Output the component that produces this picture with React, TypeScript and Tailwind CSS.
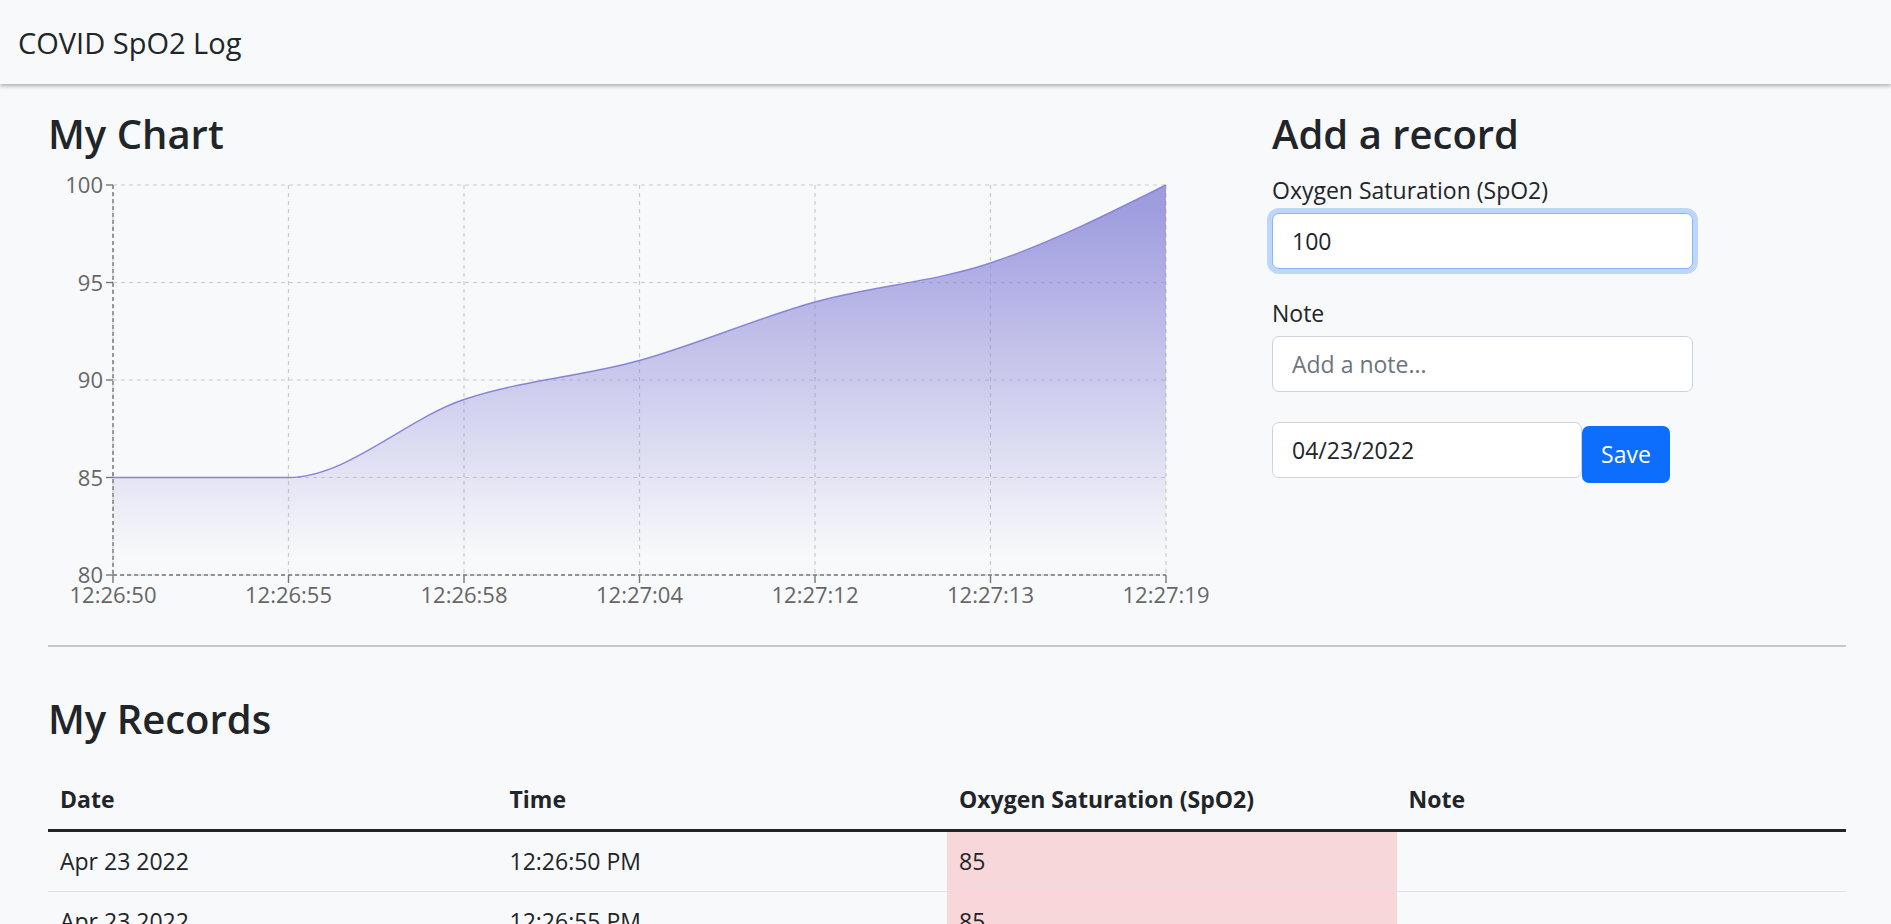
import React from "react";

type Reading = {
  date: string;
  time: string;
  label: string;
  spo2: number;
  note: string;
};

const readings: Reading[] = [
  { date: "Apr 23 2022", time: "12:26:50 PM", label: "12:26:50", spo2: 85, note: "" },
  { date: "Apr 23 2022", time: "12:26:55 PM", label: "12:26:55", spo2: 85, note: "" },
  { date: "Apr 23 2022", time: "12:26:58 PM", label: "12:26:58", spo2: 89, note: "" },
  { date: "Apr 23 2022", time: "12:27:04 PM", label: "12:27:04", spo2: 91, note: "" },
  { date: "Apr 23 2022", time: "12:27:12 PM", label: "12:27:12", spo2: 94, note: "" },
  { date: "Apr 23 2022", time: "12:27:13 PM", label: "12:27:13", spo2: 96, note: "" },
  { date: "Apr 23 2022", time: "12:27:19 PM", label: "12:27:19", spo2: 100, note: "" },
];

// plot box inside the svg
const LEFT = 65;
const RIGHT = 1118;
const TOP = 10;
const BOTTOM = 400;
const Y_MIN = 80;
const Y_MAX = 100;

const xAt = (i: number) => LEFT + (i * (RIGHT - LEFT)) / (readings.length - 1);
const yAt = (v: number) => BOTTOM - ((v - Y_MIN) / (Y_MAX - Y_MIN)) * (BOTTOM - TOP);

// same shape as d3's curveMonotoneX
function monotonePath(p: [number, number][]) {
  const n = p.length;
  const m = new Array(n).fill(0);
  const sign = (x: number) => (x < 0 ? -1 : 1);
  for (let i = 1; i < n - 1; i++) {
    const h0 = p[i][0] - p[i - 1][0];
    const h1 = p[i + 1][0] - p[i][0];
    const s0 = (p[i][1] - p[i - 1][1]) / h0;
    const s1 = (p[i + 1][1] - p[i][1]) / h1;
    const q = (s0 * h1 + s1 * h0) / (h0 + h1);
    m[i] = (sign(s0) + sign(s1)) * Math.min(Math.abs(s0), Math.abs(s1), 0.5 * Math.abs(q)) || 0;
  }
  m[0] = (3 * (p[1][1] - p[0][1]) / (p[1][0] - p[0][0]) - m[1]) / 2;
  m[n - 1] = (3 * (p[n - 1][1] - p[n - 2][1]) / (p[n - 1][0] - p[n - 2][0]) - m[n - 2]) / 2;

  let d = `M${p[0][0]},${p[0][1]}`;
  for (let i = 0; i < n - 1; i++) {
    const dx = (p[i + 1][0] - p[i][0]) / 3;
    d += ` C${p[i][0] + dx},${p[i][1] + dx * m[i]} ${p[i + 1][0] - dx},${p[i + 1][1] - dx * m[i + 1]} ${p[i + 1][0]},${p[i + 1][1]}`;
  }
  return d;
}

function SpO2Chart() {
  const pts = readings.map((r, i) => [xAt(i), yAt(r.spo2)] as [number, number]);
  const line = monotonePath(pts);
  const area = `${line} L${RIGHT},${BOTTOM} L${LEFT},${BOTTOM} Z`;
  const yTicks = [80, 85, 90, 95, 100];

  return (
    <svg width="1200" height="435" className="mt-[17px] block">
      <defs>
        <linearGradient id="spo2Fill" x1="0" y1="0" x2="0" y2="1">
          <stop offset="5%" stopColor="#8884d8" stopOpacity={0.8} />
          <stop offset="95%" stopColor="#8884d8" stopOpacity={0} />
        </linearGradient>
      </defs>

      {/* grid */}
      <g stroke="#cccccc" strokeDasharray="4 4" strokeWidth="1.2">
        {yTicks.map((t) => (
          <line key={t} x1={LEFT} x2={RIGHT} y1={yAt(t)} y2={yAt(t)} />
        ))}
        {readings.map((_, i) => (
          <line key={i} x1={xAt(i)} x2={xAt(i)} y1={TOP} y2={BOTTOM} />
        ))}
      </g>

      <path d={area} fill="url(#spo2Fill)" />
      <path d={line} fill="none" stroke="#8884d8" strokeWidth="1.4" />

      {/* axes */}
      <g stroke="#777777" strokeWidth="1.4">
        <line x1={LEFT} x2={LEFT} y1={TOP} y2={BOTTOM} strokeDasharray="4 3" />
        <line x1={LEFT} x2={RIGHT} y1={BOTTOM} y2={BOTTOM} strokeDasharray="4 3" />
        {yTicks.map((t) => (
          <line key={t} x1={LEFT - 7} x2={LEFT} y1={yAt(t)} y2={yAt(t)} />
        ))}
        {readings.map((_, i) => (
          <line key={i} x1={xAt(i)} x2={xAt(i)} y1={BOTTOM} y2={BOTTOM + 8} />
        ))}
      </g>

      <g fill="#666666" fontSize="22" fontFamily="'Open Sans', sans-serif">
        {yTicks.map((t) => (
          <text key={t} x={LEFT - 10} y={yAt(t) + 8} textAnchor="end">
            {t}
          </text>
        ))}
        {readings.map((r, i) => (
          <text key={i} x={xAt(i)} y={428} textAnchor="middle">
            {r.label}
          </text>
        ))}
      </g>
    </svg>
  );
}

function RecordForm() {
  return (
    <div className="w-[421px]">
      <h2 className="text-[40px] font-semibold leading-[48px]">Add a record</h2>

      <label className="mt-[15px] block text-[23px] leading-[34px]">Oxygen Saturation (SpO2)</label>
      <input
        type="text"
        defaultValue="100"
        className="mt-[6px] block h-[56px] w-full rounded-[7px] border border-[#86b7fe] bg-white px-[19px] text-[23px] text-[#212529] shadow-[0_0_0_5px_rgba(13,110,253,0.25)] outline-none"
      />

      <label className="mt-[27px] block text-[23px] leading-[34px]">Note</label>
      <input
        type="text"
        placeholder="Add a note..."
        className="mt-[6px] block h-[56px] w-full rounded-[7px] border border-[#ced4da] bg-white px-[19px] text-[23px] text-[#212529] placeholder:text-[#6c757d] outline-none"
      />

      <div className="mt-[30px] flex items-start">
        <input
          type="text"
          defaultValue="04/23/2022"
          className="h-[56px] w-[310px] rounded-[7px] border border-[#ced4da] bg-white px-[19px] text-[23px] text-[#212529] outline-none"
        />
        <button className="mt-[4px] h-[57px] w-[88px] rounded-[7px] bg-[#0d6efd] text-[23px] text-white">
          Save
        </button>
      </div>
    </div>
  );
}

function RecordsTable() {
  return (
    <table className="mt-[26px] w-full table-fixed border-collapse text-[23px]">
      <thead>
        <tr className="border-b-[3px] border-[#212529]">
          <th className="h-[61px] w-1/4 px-[12px] text-left font-bold">Date</th>
          <th className="h-[61px] w-1/4 px-[12px] text-left font-bold">Time</th>
          <th className="h-[61px] w-1/4 px-[12px] text-left font-bold">Oxygen Saturation (SpO2)</th>
          <th className="h-[61px] w-1/4 px-[12px] text-left font-bold">Note</th>
        </tr>
      </thead>
      <tbody>
        {readings.map((r, i) => (
          <tr key={i} className="border-b border-[#dee2e6]">
            <td className="h-[61px] px-[12px]">{r.date}</td>
            <td className="h-[61px] px-[12px]">{r.time}</td>
            <td className={`h-[61px] px-[12px] ${r.spo2 < 95 ? "bg-[#f8d7da]" : "bg-[#fff3cd]"}`}>{r.spo2}</td>
            <td className="h-[61px] px-[12px]">{r.note}</td>
          </tr>
        ))}
      </tbody>
    </table>
  );
}

export default function App() {
  return (
    <div className="h-screen overflow-hidden bg-[#f8f9fa] font-['Open_Sans',sans-serif] text-[#212529]">
      <nav className="relative z-10 flex h-[84px] items-center bg-[#f8f9fa] px-[18px] shadow-[0_2px_4px_rgba(0,0,0,0.3)]">
        <span className="text-[29px] leading-none">COVID SpO2 Log</span>
      </nav>

      <main className="pl-[48px] pr-[45px]">
        <div className="grid grid-cols-[1224px_1fr] pt-[26px]">
          <section>
            <h2 className="text-[40px] font-semibold leading-[48px]">My Chart</h2>
            <SpO2Chart />
          </section>
          <section>
            <RecordForm />
          </section>
        </div>

        <hr className="mt-[35px] border-0 border-t-2 border-[#c8c9ca]" />

        <h2 className="mt-[48px] text-[40px] font-semibold leading-[48px]">My Records</h2>
        <RecordsTable />
      </main>
    </div>
  );
}
